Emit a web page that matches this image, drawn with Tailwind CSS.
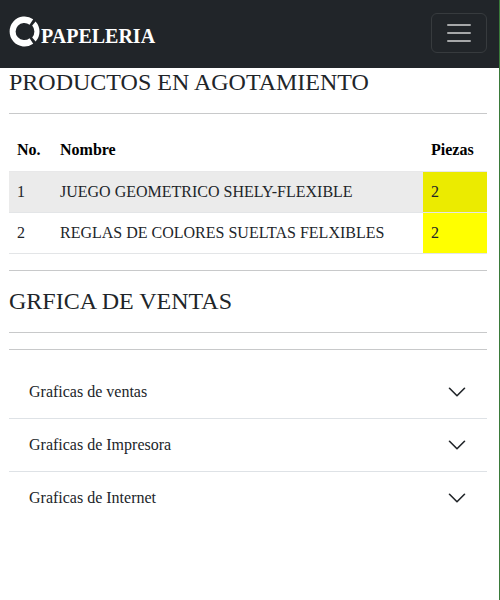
<!DOCTYPE html>
<html lang="es">
<head>
<meta charset="utf-8">
<meta name="viewport" content="width=device-width, initial-scale=1">
<title>Papeleria</title>
<script src="https://cdn.jsdelivr.net/npm/@tailwindcss/browser@4"></script>
</head>
<body class="min-h-screen flex flex-col border-r border-[#3a7a3a] bg-white text-base text-[#212529] font-['Liberation_Serif',serif]">
<header class="flex h-17 shrink-0 items-center justify-between bg-[#212529] pb-0.5 pl-[9px] pr-3">
  <a href="#" class="flex items-start gap-px text-white">
    <svg class="size-[31px]" viewBox="0 0 31 31" fill="currentColor" aria-hidden="true">
      <path d="M24.2 3.2A15 15 0 1 0 24.2 27.8L20.6 22.2A8.6 8.6 0 1 1 20.6 8.8Z"/>
      <path d="M26.6 5.4A15 15 0 0 1 26.6 25.6L23.2 21.6A9.6 9.6 0 0 0 23.2 9.4Z"/>
    </svg>
    <span class="pt-1.5 text-xl leading-7 font-bold">PAPELERIA</span>
  </a>
  <button type="button" aria-label="Abrir menú" class="flex h-10 w-14 items-center justify-center rounded-md border border-[#373b3e] text-[#a6a8a9]">
    <svg class="size-[30px]" viewBox="0 0 30 30" stroke="currentColor" stroke-width="2" stroke-linecap="round" aria-hidden="true"><path d="M4 7h22M4 15h22M4 23h22"/></svg>
  </button>
</header>
<main class="pl-[9px] pr-3">
  <h4 class="text-2xl leading-[29px]">PRODUCTOS EN AGOTAMIENTO</h4>
  <hr class="my-4 border-[#c8c9ca]">
  <table class="w-full border-collapse text-left">
    <thead>
      <tr class="h-[41px] border-b border-[#e8e8e9] text-black">
        <th class="w-[43px] p-2">No.</th>
        <th class="p-2">Nombre</th>
        <th class="w-16 p-2">Piezas</th>
      </tr>
    </thead>
    <tbody>
      <tr class="h-[41px] border-b border-[#e3e5e7] bg-[#ebebeb]">
        <td class="p-2">1</td>
        <td class="p-2">JUEGO GEOMETRICO SHELY-FLEXIBLE</td>
        <td class="bg-[#ebeb00] p-2">2</td>
      </tr>
      <tr class="h-[41px] border-b border-[#e3e5e7]">
        <td class="p-2">2</td>
        <td class="p-2">REGLAS DE COLORES SUELTAS FELXIBLES</td>
        <td class="bg-[#ffff00] p-2">2</td>
      </tr>
    </tbody>
  </table>
  <hr class="my-4 border-[#c8c9ca]">
  <h4 class="text-2xl leading-[29px]">GRFICA DE VENTAS</h4>
  <hr class="my-4 border-[#c8c9ca]">
  <hr class="my-4 border-[#c8c9ca]">
  <section>
    <button type="button" aria-expanded="false" class="flex w-full items-center justify-between border-b border-[#dee2e6] px-5 py-[14px]">
      Graficas de ventas
      <svg class="size-5" viewBox="0 0 16 16" fill="none" stroke="currentColor" stroke-width="1.3" stroke-linecap="round" stroke-linejoin="round" aria-hidden="true"><path d="M2 5l6 6 6-6"/></svg>
    </button>
    <button type="button" aria-expanded="false" class="flex w-full items-center justify-between border-b border-[#dee2e6] px-5 py-[14px]">
      Graficas de Impresora
      <svg class="size-5" viewBox="0 0 16 16" fill="none" stroke="currentColor" stroke-width="1.3" stroke-linecap="round" stroke-linejoin="round" aria-hidden="true"><path d="M2 5l6 6 6-6"/></svg>
    </button>
    <button type="button" aria-expanded="false" class="flex w-full items-center justify-between px-5 py-[14px]">
      Graficas de Internet
      <svg class="size-5" viewBox="0 0 16 16" fill="none" stroke="currentColor" stroke-width="1.3" stroke-linecap="round" stroke-linejoin="round" aria-hidden="true"><path d="M2 5l6 6 6-6"/></svg>
    </button>
  </section>
</main>
</body>
</html>
